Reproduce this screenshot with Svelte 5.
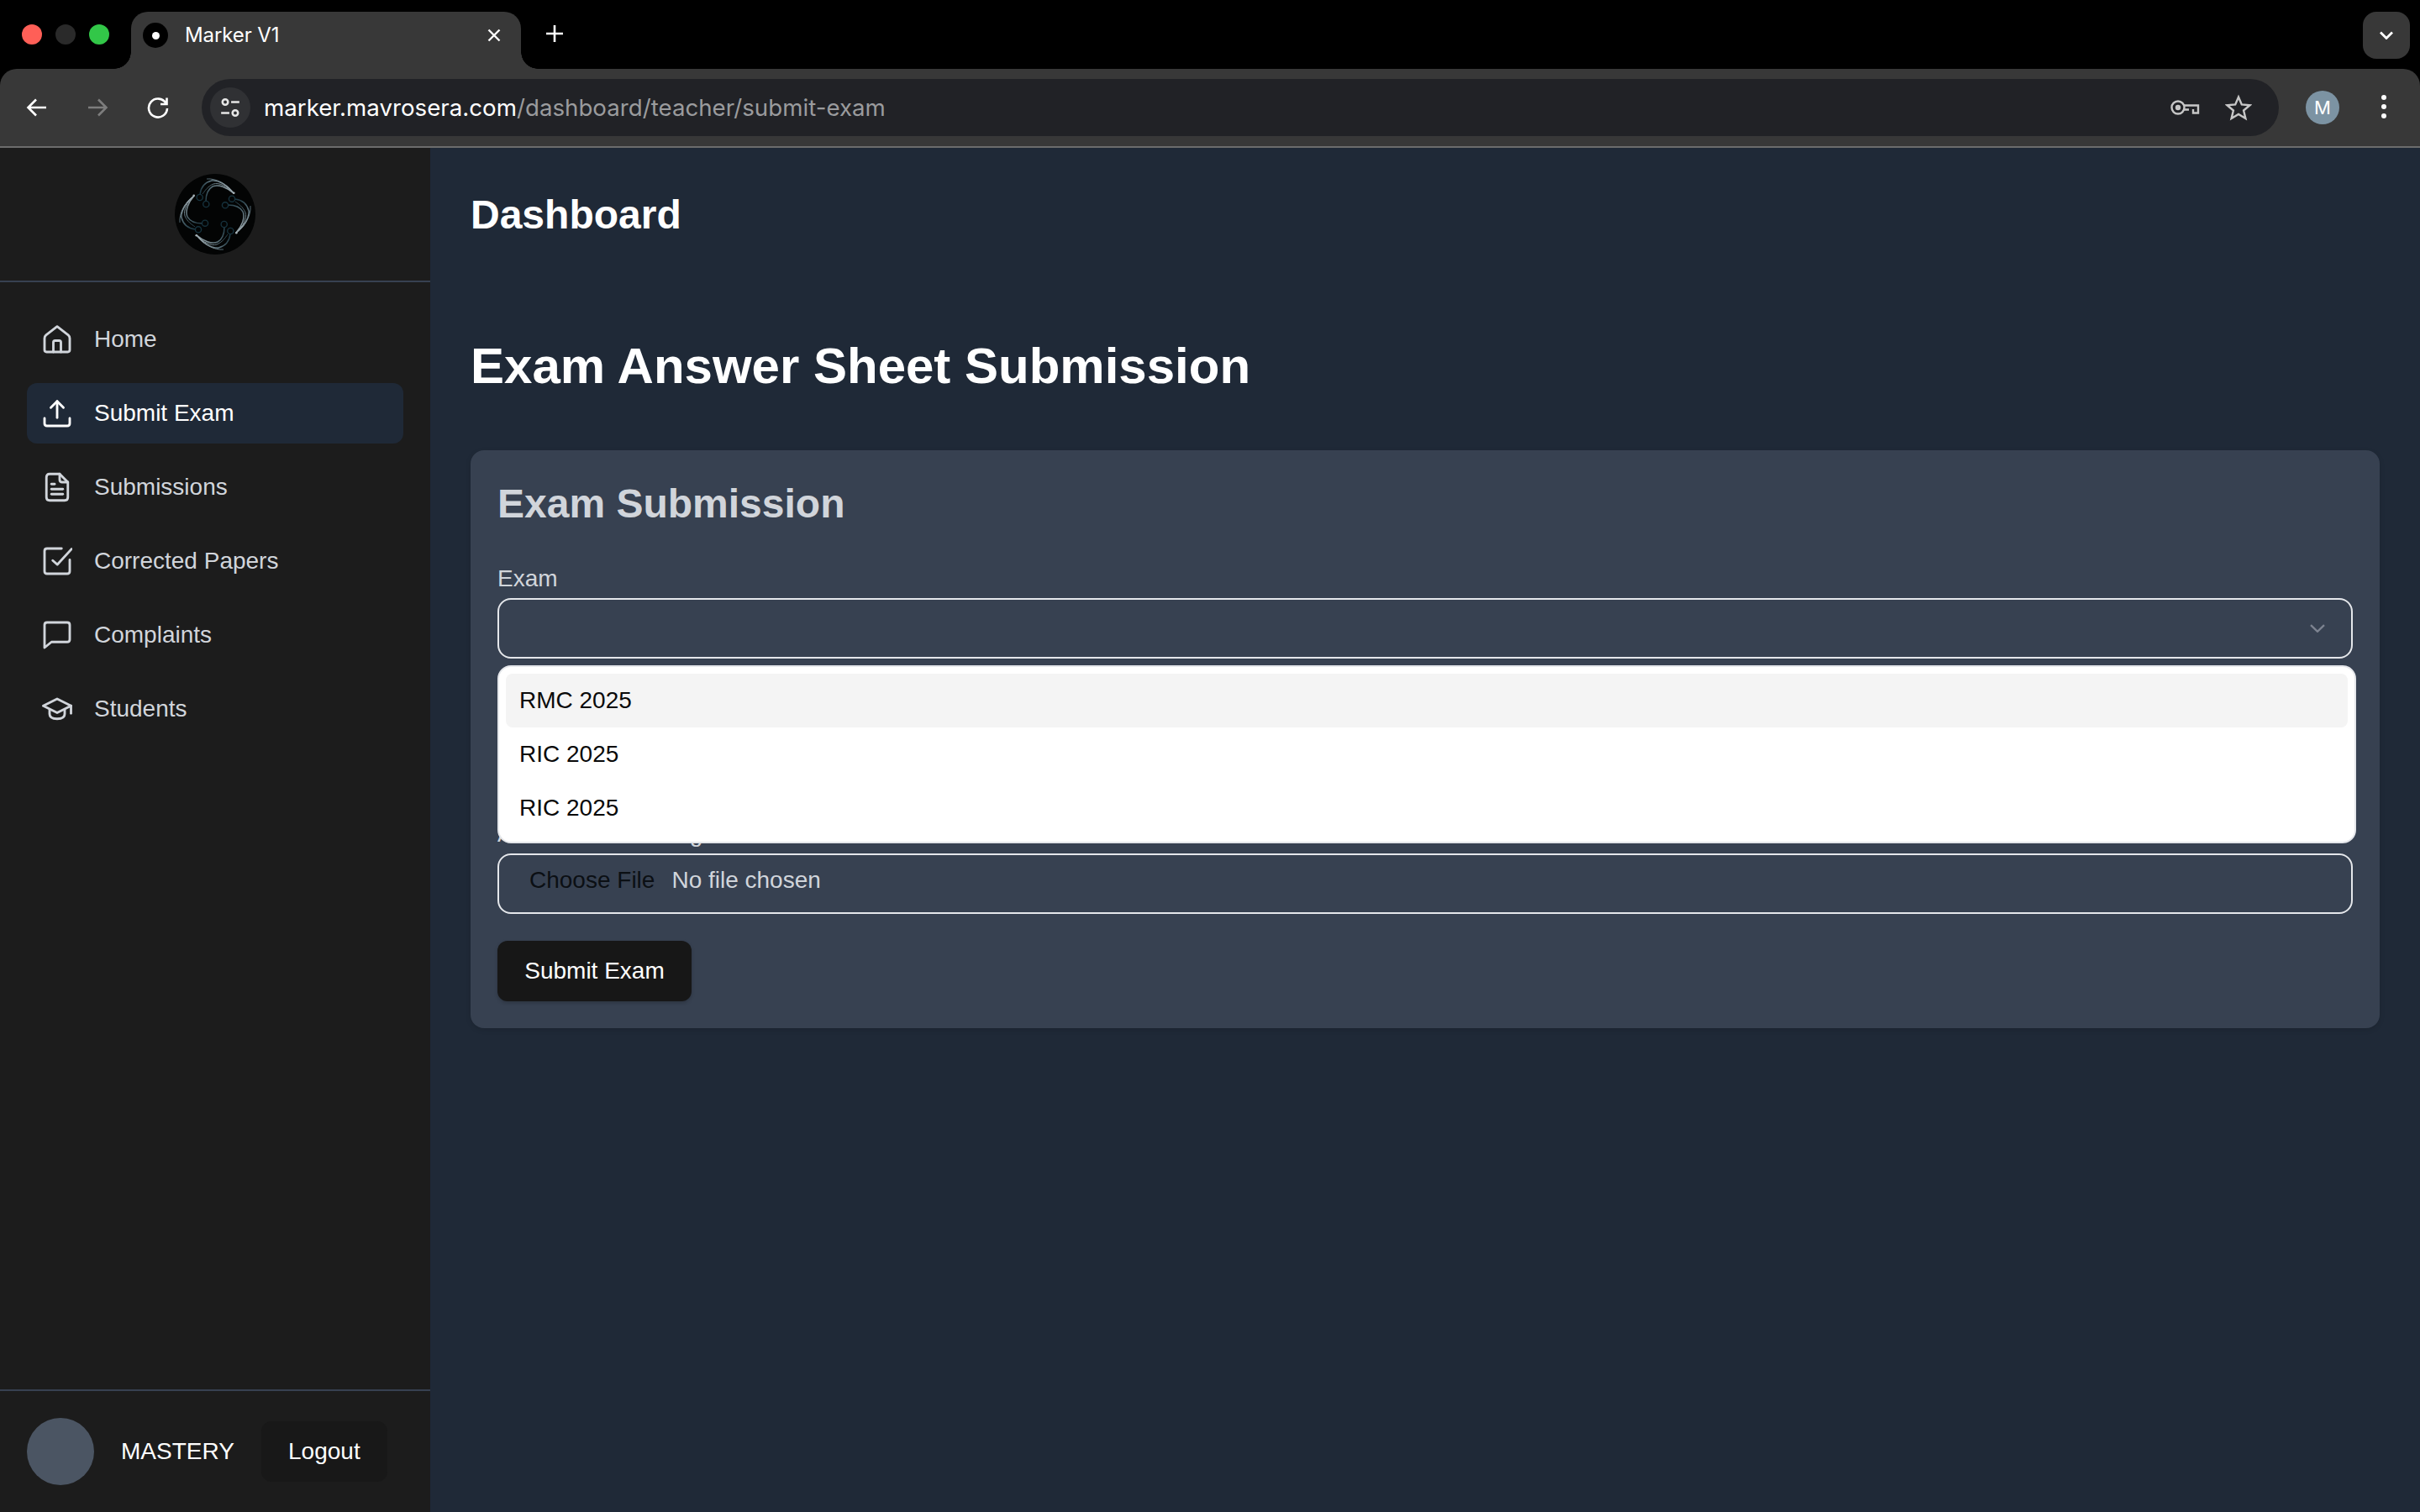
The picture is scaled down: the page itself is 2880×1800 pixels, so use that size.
<script>
const navItems = [
  { label: "Home", paths: ["M12 1.8 L20.8 8.6 Q22 9.6 22 11.2 V20.4 Q22 22 20.4 22 H3.6 Q2 22 2 20.4 V11.2 Q2 9.6 3.2 8.6 Z", "M9 22 V14.4 Q9 13 10.4 13 H13.6 Q15 13 15 14.4 V22"] },
  { label: "Submit Exam", active: true, paths: ["M2 16 V20 Q2 22 4 22 H20 Q22 22 22 20 V16", "M12 15.5 V2.5", "M7 7.5 L12 2.5 L17 7.5"] },
  { label: "Submissions", paths: ["M6 1.5 H14 L20.5 8 V20 Q20.5 22.5 18 22.5 H6 Q3.5 22.5 3.5 20 V4 Q3.5 1.5 6 1.5 Z", "M14 1.5 V6 Q14 8 16 8 H20.5", "M7.5 9.5 H10", "M7.5 13.5 H16.5", "M7.5 17.5 H16.5"] },
  { label: "Corrected Papers", paths: ["M15.5 2 H4 Q2 2 2 4 V20 Q2 22 4 22 H20 Q22 22 22 20 V11", "M8.5 11.5 L12.2 14.7 L23.4 2.4"] },
  { label: "Complaints", paths: ["M4 2 H20 Q22 2 22 4 V15.5 Q22 17.5 20 17.5 H7.5 L2 22 V4 Q2 2 4 2 Z"] },
  { label: "Students", paths: ["M12 4 L23 9.5 L12 15 L1 9.5 Z", "M6 12.5 V16 Q6 19.8 12 19.8 Q18 19.8 18 16 V12.5", "M23 9.5 V15.5"] },
];

const exams = ["RMC 2025", "RIC 2025", "RIC 2025"];
const logoTurns = [0, 90, 180, 270];
</script>

<div class="window">
  <header class="browser">
    <div class="tabstrip">
      <div class="lights">
        <span class="light red"></span>
        <span class="light off"></span>
        <span class="light green"></span>
      </div>
      <div class="tab">
        <span class="favicon"><span></span></span>
        <span class="tab-title">Marker V1</span>
        <svg class="tab-close" viewBox="0 0 16 16"><path d="M1.5 1.5 L14.5 14.5 M14.5 1.5 L1.5 14.5" /></svg>
      </div>
      <svg class="new-tab" viewBox="0 0 20 20"><path d="M10 0 V20 M0 10 H20" /></svg>
      <div class="tab-menu">
        <svg viewBox="0 0 16 10"><path d="M1 1.5 L8 8.5 L15 1.5" /></svg>
      </div>
    </div>
    <div class="toolbar">
      <svg class="tool" viewBox="0 0 28 28"><path d="M25 14 H4 M13 4.5 L3.5 14 L13 23.5" /></svg>
      <svg class="tool dim" viewBox="0 0 28 28"><path d="M3 14 H24 M15 4.5 L24.5 14 L15 23.5" /></svg>
      <svg class="tool" viewBox="0 0 28 28"><path d="M23.5 9 A11 11 0 1 0 25 15 M24.5 2.5 V10 H17" /></svg>
      <div class="omnibox">
        <span class="site-chip">
          <svg viewBox="0 0 24 24"><circle cx="6.5" cy="6" r="3" /><path d="M13 6 H22 M2 18 H11" /><circle cx="17.5" cy="18" r="3" /></svg>
        </span>
        <span class="url"><span class="host">marker.mavrosera.com</span>/dashboard/teacher/submit-exam</span>
        <svg class="omni-icon key" viewBox="0 0 36 20"><circle cx="10" cy="10" r="7.5" /><circle class="solid" cx="10" cy="10" r="3.2" /><path d="M17 7.5 H34 V16.5 H28 V12 M23 12.5 H17" /></svg>
        <svg class="omni-icon star" viewBox="0 0 32 32"><path d="M16 3.5 L19.8 12.4 L29.5 13.2 L22.1 19.5 L24.4 29 L16 24 L7.6 29 L9.9 19.5 L2.5 13.2 L12.2 12.4 Z" /></svg>
      </div>
      <span class="profile">M</span>
      <span class="dots"><i></i><i></i><i></i></span>
    </div>
  </header>

  <div class="app">
    <aside class="sidebar">
      <div class="brand">
        <svg class="logo" viewBox="0 0 96 96">
          <defs>
            <linearGradient id="strand" gradientUnits="userSpaceOnUse" x1="66" y1="18" x2="30" y2="30">
              <stop offset="0" stop-color="#95a3a9" />
              <stop offset="0.45" stop-color="#5f747d" />
              <stop offset="1" stop-color="#14303b" />
            </linearGradient>
          </defs>
          <circle cx="48" cy="48" r="48" fill="#030404" />
          {#each logoTurns as turn}
            <g transform="rotate({turn} 48 48)" fill="none">
              <path d="M70 23 C62 12 49 5 38 6" stroke="url(#strand)" stroke-width="1" />
              <path d="M70 23 C62 13 52 7 44 8 C36 10 31 15 30 24.5" stroke="url(#strand)" stroke-width="1.5" />
              <path d="M70 23 C62 14 52 10 46 12 C39 15 36 20 33 24" stroke="url(#strand)" stroke-width="1" />
              <path d="M70 23 C62 16 52 12 45 15 C38 19 37 26 37 32.5" stroke="url(#strand)" stroke-width="1.5" />
              <circle cx="29.7" cy="28" r="3.6" stroke="#16323d" stroke-width="1.4" />
              <circle cx="37.3" cy="36" r="3.6" stroke="#16323d" stroke-width="1.4" />
              <circle cx="70.3" cy="22.7" r="1.3" fill="#a7b3b8" />
            </g>
          {/each}
        </svg>
      </div>

      <nav class="nav">
        {#each navItems as item}
          <a class="nav-item" class:active={item.active} href="#top">
            <svg class="nav-icon" viewBox="0 0 24 24">
              {#each item.paths as d}
                <path {d} />
              {/each}
            </svg>
            <span>{item.label}</span>
          </a>
        {/each}
      </nav>

      <div class="account">
        <span class="avatar"></span>
        <span class="username">MASTERY</span>
        <button class="logout">Logout</button>
      </div>
    </aside>

    <main class="content">
      <div class="topbar">
        <h2>Dashboard</h2>
      </div>
      <h1>Exam Answer Sheet Submission</h1>

      <section class="card">
        <h3>Exam Submission</h3>

        <div class="field">
          <span class="label">Exam</span>
          <div class="control select">
            <svg viewBox="0 0 18 10"><path d="M1 1.2 L9 8.8 L17 1.2" /></svg>
          </div>
          <ul class="dropdown">
            {#each exams as exam, i}
              <li class:hover={i === 0}>{exam}</li>
            {/each}
          </ul>
        </div>

        <div class="field">
          <span class="label"></span>
          <div class="control"></div>
        </div>

        <div class="field last">
          <span class="label">Answer Sheet Images</span>
          <div class="control file">
            <span class="file-btn">Choose File</span>
            <span>No file chosen</span>
          </div>
        </div>

        <button class="submit">Submit Exam</button>
      </section>
    </main>
  </div>
</div>

<style>
:global(body) {
  margin: 0;
  background: #000;
}

.window {
  width: 2880px;
  height: 1800px;
  display: flex;
  flex-direction: column;
  overflow: hidden;
  font-family: "Liberation Sans", Arial, sans-serif;
  font-size: 28px;
}

/* browser chrome */
.browser {
  height: 176px;
  flex: none;
  background: #000;
  font-family: Inter, "Liberation Sans", sans-serif;
}

.tabstrip {
  height: 82px;
  display: flex;
  align-items: flex-start;
  padding-top: 14px;
  box-sizing: border-box;
}

.lights {
  width: 156px;
  height: 54px;
  flex: none;
  display: flex;
  align-items: center;
  gap: 16px;
  padding-left: 26px;
  box-sizing: border-box;
}

.light {
  width: 24px;
  height: 24px;
  border-radius: 50%;
}
.red { background: #ff5f57; }
.off { background: #2a2a2a; }
.green { background: #32c748; }

.tab {
  position: relative;
  width: 464px;
  height: 68px;
  flex: none;
  display: flex;
  align-items: flex-start;
  padding-top: 13px;
  box-sizing: border-box;
  background: #383838;
  border-radius: 20px 20px 0 0;
}

.tab::before,
.tab::after {
  content: "";
  position: absolute;
  bottom: 0;
  width: 20px;
  height: 20px;
}
.tab::before {
  left: -20px;
  background: radial-gradient(circle at 0 0, #000 19.5px, #383838 20px);
}
.tab::after {
  right: -20px;
  background: radial-gradient(circle at 100% 0, #000 19.5px, #383838 20px);
}

.favicon {
  width: 30px;
  height: 30px;
  margin-left: 14px;
  border-radius: 50%;
  background: #000;
  display: flex;
  align-items: center;
  justify-content: center;
}
.favicon span {
  width: 9px;
  height: 9px;
  border-radius: 50%;
  background: #fff;
}

.tab-title {
  margin-left: 20px;
  width: 352px;
  font-size: 24px;
  line-height: 30px;
  letter-spacing: -0.1px;
  color: #fff;
}

.tab-close {
  width: 16px;
  height: 16px;
  position: absolute;
  left: 424px;
  top: 20px;
  fill: none;
  stroke: #fff;
  stroke-width: 2.4;
}

.new-tab {
  width: 20px;
  height: 20px;
  margin: 16px 0 0 30px;
  fill: none;
  stroke: #fff;
  stroke-width: 2.6;
}

.tab-menu {
  width: 56px;
  height: 56px;
  margin-left: auto;
  margin-right: 12px;
  border-radius: 16px;
  background: #383838;
  display: flex;
  align-items: center;
  justify-content: center;
}
.tab-menu svg {
  width: 16px;
  height: 10px;
  fill: none;
  stroke: #fff;
  stroke-width: 2.8;
}

.toolbar {
  height: 94px;
  display: flex;
  align-items: flex-start;
  padding-top: 12px;
  box-sizing: border-box;
  background: #383838;
  border-bottom: 2px solid #6c6c6c;
  border-radius: 20px 20px 0 0;
}

.tool {
  width: 28px;
  height: 28px;
  margin: 20px 0 0 30px;
  flex: none;
  fill: none;
  stroke: #fff;
  stroke-width: 2.6;
}
.tool + .tool {
  margin-left: 44px;
}
.tool.dim {
  stroke: #7d7d7d;
}

.omnibox {
  width: 2472px;
  height: 68px;
  margin-left: 38px;
  flex: none;
  display: flex;
  align-items: center;
  padding: 0 10px;
  box-sizing: border-box;
  background: #212226;
  border-radius: 34px;
}

.site-chip {
  width: 48px;
  height: 48px;
  border-radius: 50%;
  background: #303134;
  display: flex;
  align-items: center;
  justify-content: center;
}
.site-chip svg {
  width: 26px;
  height: 26px;
  fill: none;
  stroke: #e6e6e6;
  stroke-width: 2.4;
}

.url {
  margin-left: 16px;
  font-size: 27.7px;
  color: #9a9b9d;
}
.host {
  color: #fff;
}

.omni-icon {
  fill: none;
  stroke: #c7c7c7;
  stroke-width: 2.4;
}
.key {
  width: 36px;
  height: 20px;
  margin-left: auto;
}
.key .solid {
  fill: #c7c7c7;
  stroke: none;
}
.star {
  width: 32px;
  height: 32px;
  margin: 0 22px 0 30px;
}

.profile {
  width: 40px;
  height: 40px;
  margin: 14px 0 0 32px;
  flex: none;
  border-radius: 50%;
  background: #7c93a3;
  color: #fff;
  font-size: 22px;
  line-height: 40px;
  text-align: center;
}

.dots {
  margin: 19px 0 0 50px;
  display: flex;
  flex-direction: column;
  gap: 5px;
}
.dots i {
  width: 6px;
  height: 6px;
  border-radius: 50%;
  background: #fff;
}

/* app */
.app {
  flex: 1;
  min-height: 0;
  display: flex;
  background: #1f2937;
}

.sidebar {
  width: 512px;
  flex: none;
  display: flex;
  flex-direction: column;
  background: #1c1c1c;
}

.brand {
  height: 158px;
  flex: none;
  display: flex;
  align-items: center;
  justify-content: center;
  border-bottom: 2px solid #374151;
}

.logo {
  width: 96px;
  height: 96px;
}

.nav {
  flex: 1;
  display: flex;
  flex-direction: column;
  gap: 16px;
  padding: 32px 32px 0;
}

.nav-item {
  height: 72px;
  display: flex;
  align-items: center;
  gap: 26px;
  padding-left: 18px;
  border-radius: 12px;
  color: #d1d5db;
  text-decoration: none;
}
.nav-item.active {
  background: #1f2937;
  color: #fff;
}

.nav-icon {
  width: 36px;
  height: 36px;
  flex: none;
  fill: none;
  stroke: currentColor;
  stroke-width: 1.9;
  stroke-linecap: round;
  stroke-linejoin: round;
}

.account {
  height: 144px;
  flex: none;
  display: flex;
  align-items: center;
  padding-left: 32px;
  border-top: 2px solid #374151;
}

.avatar {
  width: 80px;
  height: 80px;
  flex: none;
  border-radius: 50%;
  background: #4b5563;
}

.username {
  margin-left: 32px;
  color: #fff;
}

.logout {
  width: 150px;
  height: 72px;
  margin-left: 32px;
  border: none;
  border-radius: 12px;
  background: #181818;
  color: #fff;
  font: inherit;
}

.content {
  flex: 1;
  min-width: 0;
  padding: 0 48px;
}

.topbar {
  height: 158px;
  display: flex;
  align-items: center;
}

h2 {
  margin: 0;
  font-size: 48px;
  font-weight: 700;
  color: #fff;
}

h1 {
  margin: 66px 0 64px;
  font-size: 60px;
  line-height: 72px;
  font-weight: 700;
  color: #fff;
}

.card {
  height: 688px;
  padding: 32px;
  box-sizing: border-box;
  border-radius: 16px;
  background: #374151;
  box-shadow: 0 2px 6px rgba(0, 0, 0, 0.12);
}

h3 {
  margin: 0 0 40px;
  font-size: 48px;
  line-height: 64px;
  font-weight: 700;
  color: #d1d5db;
}

.field {
  position: relative;
  margin-bottom: 40px;
}
.field.last {
  margin-bottom: 32px;
}

.label {
  display: block;
  height: 40px;
  line-height: 34px;
  color: #d1d5db;
}

.control {
  height: 72px;
  box-sizing: border-box;
  border: 2.5px solid #e5e7eb;
  border-radius: 16px;
}

.select {
  display: flex;
  align-items: center;
  justify-content: flex-end;
  padding-right: 31px;
}
.select svg {
  width: 18px;
  height: 10px;
  fill: none;
  stroke: #7d8390;
  stroke-width: 2.4;
}

.dropdown {
  position: absolute;
  z-index: 2;
  left: 0;
  top: 120px;
  width: 2212px;
  height: 212px;
  margin: 0;
  padding: 8px;
  box-sizing: border-box;
  list-style: none;
  background: #fff;
  border: 2px solid #e5e7eb;
  border-radius: 16px;
  color: #0a0a0a;
}
.dropdown li {
  height: 64px;
  display: flex;
  align-items: center;
  padding-left: 16px;
  border-radius: 8px;
}
.dropdown li.hover {
  background: #f4f4f4;
}

.file {
  display: flex;
  align-items: flex-start;
  gap: 20px;
  padding: 12px 0 0 36px;
  line-height: 36px;
  color: #d1d5db;
}
.file-btn {
  color: #0b0f14;
}

.submit {
  width: 231px;
  height: 72px;
  border: none;
  border-radius: 12px;
  background: #171717;
  color: #fff;
  font: inherit;
  box-shadow: 0 2px 4px rgba(0, 0, 0, 0.2);
}
</style>
